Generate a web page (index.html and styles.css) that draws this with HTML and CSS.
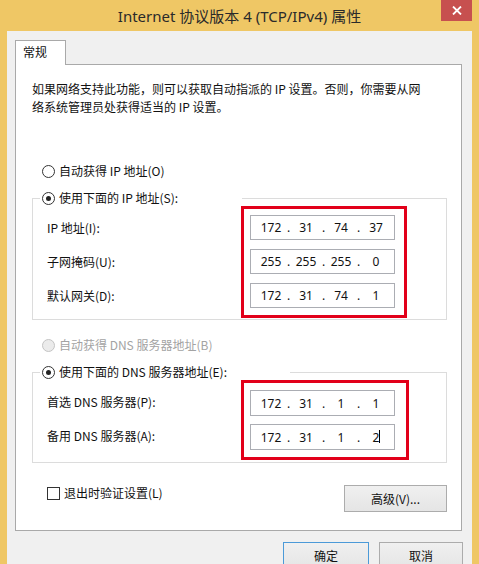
FILE: index.html
```html
<!DOCTYPE html>
<html lang="zh-CN">
<head>
<meta charset="utf-8">
<title>Internet 协议版本 4 (TCP/IPv4) 属性</title>
<link rel="stylesheet" href="styles.css">
</head>
<body>
<div class="window">
  <div class="titlebar">
    <span class="title">Internet 协议版本 4 (TCP/IPv4) 属性</span>
    <span class="close"><svg width="10" height="9" viewBox="0 0 10 9"><path d="M1 0.5 L9 8.5 M9 0.5 L1 8.5" stroke="#fff" stroke-width="1.8"/></svg></span>
  </div>
  <div class="client">
    <div class="tabs"><div class="tab">常规</div></div>
    <div class="panel">
      <p class="desc">如果网络支持此功能，则可以获取自动指派的 IP 设置。否则，你需要从网络系统管理员处获得适当的 IP 设置。</p>

      <div class="radio-row first"><span class="radio"></span><span>自动获得 IP 地址(O)</span></div>
      <fieldset class="group">
        <legend class="legend ip"><span class="radio on"></span><span>使用下面的 IP 地址(S):</span></legend>
        <div class="group-body">
          <div class="labels">
            <div class="label">IP 地址(I):</div>
            <div class="label">子网掩码(U):</div>
            <div class="label">默认网关(D):</div>
          </div>
          <div class="redbox">
            <div class="field"><span class="seg">172</span><span class="dot">.</span><span class="seg">31</span><span class="dot">.</span><span class="seg">74</span><span class="dot">.</span><span class="seg">37</span></div>
            <div class="field"><span class="seg">255</span><span class="dot">.</span><span class="seg">255</span><span class="dot">.</span><span class="seg">255</span><span class="dot">.</span><span class="seg">0</span></div>
            <div class="field"><span class="seg">172</span><span class="dot">.</span><span class="seg">31</span><span class="dot">.</span><span class="seg">74</span><span class="dot">.</span><span class="seg">1</span></div>
          </div>
        </div>
      </fieldset>

      <div class="radio-row second disabled"><span class="radio dis"></span><span>自动获得 DNS 服务器地址(B)</span></div>
      <fieldset class="group dns">
        <legend class="legend dnsl"><span class="radio on"></span><span>使用下面的 DNS 服务器地址(E):</span></legend>
        <div class="group-body">
          <div class="labels">
            <div class="label">首选 DNS 服务器(P):</div>
            <div class="label">备用 DNS 服务器(A):</div>
          </div>
          <div class="redbox">
            <div class="field"><span class="seg">172</span><span class="dot">.</span><span class="seg">31</span><span class="dot">.</span><span class="seg">1</span><span class="dot">.</span><span class="seg">1</span></div>
            <div class="field"><span class="seg">172</span><span class="dot">.</span><span class="seg">31</span><span class="dot">.</span><span class="seg">1</span><span class="dot">.</span><span class="seg caret-seg">2<span class="caret"></span></span></div>
          </div>
        </div>
      </fieldset>

      <div class="bottom-row">
        <div class="check-row"><span class="checkbox"></span><span>退出时验证设置(L)</span></div>
        <div class="btn adv">高级(V)...</div>
      </div>
    </div>
    <div class="actions">
      <div class="btn default">确定</div>
      <div class="btn">取消</div>
    </div>
  </div>
</div>
</body>
</html>
```

FILE: styles.css
```css
html, body {
  margin: 0;
  padding: 0;
  width: 479px;
  height: 564px;
  overflow: hidden;
  background: #efc765;
}
body {
  font-family: "Noto Sans CJK SC", "Noto Sans", sans-serif;
  font-size: 12px;
  color: #111;
}
.window {
  width: 479px;
  height: 564px;
  background: #efc765;
  padding: 0 7px;
  box-sizing: border-box;
  position: relative;
}
.titlebar {
  height: 31px;
  display: flex;
  align-items: center;
  justify-content: center;
}
.title {
  font-size: 15px;
  color: #2a2a2a;
  font-family: "Noto Sans", "Noto Sans CJK SC", sans-serif;
  line-height: 20px;
  margin-top: 0px;
}
.close {
  position: absolute;
  top: 0;
  right: 7px;
  width: 31px;
  height: 21px;
  background: #c7504f;
  display: flex;
  align-items: center;
  justify-content: center;
}
.client {
  background: #f0f0f0;
  height: 533px;
  padding: 9px 0 0 8px;
  box-sizing: border-box;
}
.tabs {
  display: flex;
  height: 24px;
  position: relative;
  z-index: 1;
}
.tab {
  width: 51px;
  height: 25px;
  box-sizing: border-box;
  background: #fff;
  border: 1px solid #a9a9a9;
  border-bottom: none;
  padding-left: 7px;
  line-height: 22px;
  font-size: 12px;
}
.panel {
  width: 447px;
  height: 467px;
  box-sizing: border-box;
  background: #fff;
  border: 1px solid #a9a9a9;
  padding: 0 14px 0 16px;
}
.desc {
  margin: 15px 0 0 0;
  line-height: 18px;
  max-width: 396px;
}
.radio-row {
  display: flex;
  align-items: center;
  gap: 4px;
  height: 16px;
  line-height: 16px;
  margin-left: 10px;
}
.radio-row.first { margin-top: 47px; }
.radio-row.second { margin-top: 17px; }
.disabled { color: #a3a3a3; }
.radio {
  width: 13px;
  height: 13px;
  box-sizing: border-box;
  border: 1px solid #333;
  border-radius: 50%;
  background: #fff;
  display: inline-flex;
  align-items: center;
  justify-content: center;
  flex: none;
}
.radio.on::after {
  content: "";
  width: 5px;
  height: 5px;
  border-radius: 50%;
  background: #222;
}
.radio.dis {
  border-color: #c4c4c4;
  background: #ebebeb;
}
.group {
  margin: 11px 0 0 0;
  padding: 0;
  border: 1px solid #dcdcdc;
  min-width: 0;
  width: 415px;
  box-sizing: border-box;
}
.legend {
  display: flex;
  align-items: center;
  gap: 4px;
  height: 16px;
  line-height: 16px;
  padding: 0 0 0 2px;
  margin-left: 7px;
  box-sizing: border-box;
  background: #fff;
}
.legend.ip { width: 202px; }
.legend.dnsl { width: 250px; }
.group-body {
  display: flex;
  padding-bottom: 1px;
}
.dns .group-body { padding-bottom: 2px; }
.labels {
  width: 208px;
  flex: none;
  box-sizing: border-box;
  padding: 9px 0 0 14px;
  display: flex;
  flex-direction: column;
  gap: 9px;
}
.label {
  height: 25px;
  line-height: 25px;
}
.redbox {
  border: 3px solid #e2001a;
  padding: 6px 9px 7px 6px;
  display: flex;
  flex-direction: column;
  gap: 9px;
}
.dns .redbox {
  padding: 7px 11px 7px 6px;
  gap: 8px;
}
.dns .field { height: 26px; }
.field {
  width: 145px;
  height: 25px;
  box-sizing: border-box;
  border: 1px solid #abadb3;
  display: flex;
  align-items: center;
  padding-left: 8px;
  font-family: "Noto Sans", sans-serif;
  font-size: 12px;
  color: #111;
}
.seg {
  width: 24px;
  text-align: center;
  position: relative;
}
.dot {
  width: 11px;
  text-align: center;
}
.caret {
  position: absolute;
  left: 15px;
  top: 1px;
  width: 1px;
  height: 13px;
  background: #000;
}
.bottom-row {
  display: flex;
  justify-content: space-between;
  align-items: flex-start;
  margin-top: 22px;
  width: 415px;
}
.check-row {
  display: flex;
  align-items: center;
  gap: 4px;
  height: 16px;
  line-height: 16px;
  margin-left: 15px;
  margin-top: 0px;
}
.checkbox {
  width: 13px;
  height: 13px;
  box-sizing: border-box;
  border: 1px solid #333;
  background: #fff;
}
.btn {
  box-sizing: border-box;
  border: 1px solid #acacac;
  background: linear-gradient(#f0f0f0, #e5e5e5);
  display: flex;
  align-items: center;
  justify-content: center;
  font-size: 12px;
}
.btn.adv {
  width: 103px;
  height: 27px;
}
.actions {
  display: flex;
  gap: 10px;
  margin-top: 11px;
  padding-left: 268px;
}
.actions .btn {
  width: 86px;
  height: 27px;
}
.actions .btn + .btn { width: 84px; }
.btn.default {
  border-color: #4b9ad8;
}
```
